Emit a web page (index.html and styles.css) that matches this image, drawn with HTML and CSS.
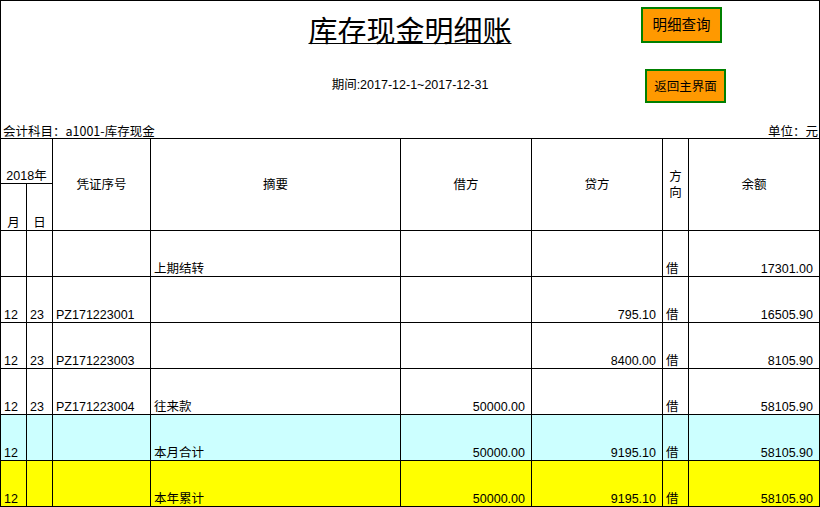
FILE: index.html
```html
<!DOCTYPE html>
<html lang="zh-CN">
<head>
<meta charset="utf-8">
<title>库存现金明细账</title>
<link rel="stylesheet" href="styles.css">
</head>
<body>
<div class="sheet">
  <header class="head">
    <h1 class="title">库存现金明细账</h1>
    <button class="btn btn-query" type="button">明细查询</button>
    <p class="period">期间:2017-12-1~2017-12-31</p>
    <button class="btn btn-back" type="button">返回主界面</button>
    <div class="subject"><span>会计科目：a1001-库存现金</span><span>单位：元</span></div>
  </header>
  <div class="ledger">
    <div class="c hc h-year">2018年</div>
    <div class="c hc h-month">月</div>
    <div class="c hc h-day">日</div>
    <div class="c hc hm h-voucher">凭证序号</div>
    <div class="c hc hm h-summary">摘要</div>
    <div class="c hc hm h-debit">借方</div>
    <div class="c hc hm h-credit">贷方</div>
    <div class="c hc hm h-dir">方<br>向</div>
    <div class="c hc hm h-bal">余额</div>

    <div class="c"></div><div class="c"></div><div class="c"></div><div class="c">上期结转</div><div class="c num"></div><div class="c num"></div><div class="c">借</div><div class="c num">17301.00</div>

    <div class="c">12</div><div class="c">23</div><div class="c">PZ171223001</div><div class="c"></div><div class="c num"></div><div class="c num">795.10</div><div class="c">借</div><div class="c num">16505.90</div>

    <div class="c">12</div><div class="c">23</div><div class="c">PZ171223003</div><div class="c"></div><div class="c num"></div><div class="c num">8400.00</div><div class="c">借</div><div class="c num">8105.90</div>

    <div class="c">12</div><div class="c">23</div><div class="c">PZ171223004</div><div class="c">往来款</div><div class="c num">50000.00</div><div class="c num"></div><div class="c">借</div><div class="c num">58105.90</div>

    <div class="c month">12</div><div class="c month"></div><div class="c month"></div><div class="c month">本月合计</div><div class="c month num">50000.00</div><div class="c month num">9195.10</div><div class="c month">借</div><div class="c month num">58105.90</div>

    <div class="c year">12</div><div class="c year"></div><div class="c year"></div><div class="c year">本年累计</div><div class="c year num">50000.00</div><div class="c year num">9195.10</div><div class="c year">借</div><div class="c year num">58105.90</div>
  </div>
</div>
</body>
</html>
```

FILE: styles.css
```css
* { box-sizing: border-box; }
html, body { margin: 0; padding: 0; background: #fff; }
body {
  font-family: "Liberation Sans", Arial, "Noto Sans CJK SC", sans-serif;
  color: #000;
}
.sheet {
  width: 820px;
  height: 507px;
  border: 1px solid #000;
  border-bottom: none;
  overflow: hidden;
}
.head {
  height: 137px;
  display: grid;
  grid-template-columns: 1fr 206px 1fr;
  grid-template-rows: 49px 60px 28px;
}
.title {
  grid-column: 2;
  grid-row: 1;
  margin: 14px 0 0;
  justify-self: center;
  align-self: start;
  font-family: "Noto Sans CJK SC", sans-serif;
  font-weight: normal;
  font-size: 29px;
  line-height: 29px;
  text-decoration: underline;
  text-decoration-thickness: 1px;
  text-underline-offset: 1px;
  white-space: nowrap;
}
.btn {
  grid-column: 3;
  justify-self: start;
  align-self: start;
  width: 81px;
  padding: 0;
  border: 2px solid #008000;
  background: #ff9900;
  color: #000;
  font-family: "Noto Sans CJK SC", sans-serif;
  display: flex;
  align-items: center;
  justify-content: center;
}
.btn-query {
  grid-row: 1;
  height: 36px;
  margin: 6px 0 0 128px;
  padding-bottom: 4px;
  font-size: 14.5px;
}
.btn-back {
  grid-row: 2;
  height: 34px;
  margin: 19px 0 0 132px;
  padding-bottom: 2px;
  font-size: 12.5px;
}
.period {
  grid-column: 2;
  grid-row: 2;
  justify-self: center;
  align-self: start;
  margin: 28px 0 0;
  font-size: 12.5px;
  line-height: 14px;
  white-space: nowrap;
}
.subject {
  grid-column: 1 / -1;
  grid-row: 3;
  display: flex;
  justify-content: space-between;
  align-items: flex-end;
  padding: 0 1px 0 2px;
  font-family: "Noto Sans CJK SC", sans-serif;
  font-size: 12.5px;
  line-height: 14px;
}
.ledger {
  display: grid;
  grid-template-columns: 25px 25px 97px 249px 130px 130px 25px 130px;
  grid-template-rows: 44px 46px repeat(6, 45px);
  gap: 1px;
  background: #000;
  border-top: 1px solid #000;
  border-bottom: 1px solid #000;
}
.c {
  background: #fff;
  display: flex;
  align-items: flex-end;
  padding: 0 2px 0 3px;
  font-size: 12.5px;
  line-height: 14px;
  white-space: nowrap;
}
.num { justify-content: flex-end; padding-right: 6px; }
.hc { justify-content: center; text-align: center; padding: 0; }
.hm { grid-row: 1 / 3; align-items: center; }
.h-year { grid-column: 1 / 3; grid-row: 1; }
.h-month { grid-column: 1; grid-row: 2; }
.h-day { grid-column: 2; grid-row: 2; }
.h-voucher { grid-column: 3; }
.h-summary { grid-column: 4; }
.h-debit { grid-column: 5; }
.h-credit { grid-column: 6; }
.h-dir { grid-column: 7; line-height: 16px; }
.h-bal { grid-column: 8; }
.month { background: #ccffff; }
.year { background: #ffff00; }
```
